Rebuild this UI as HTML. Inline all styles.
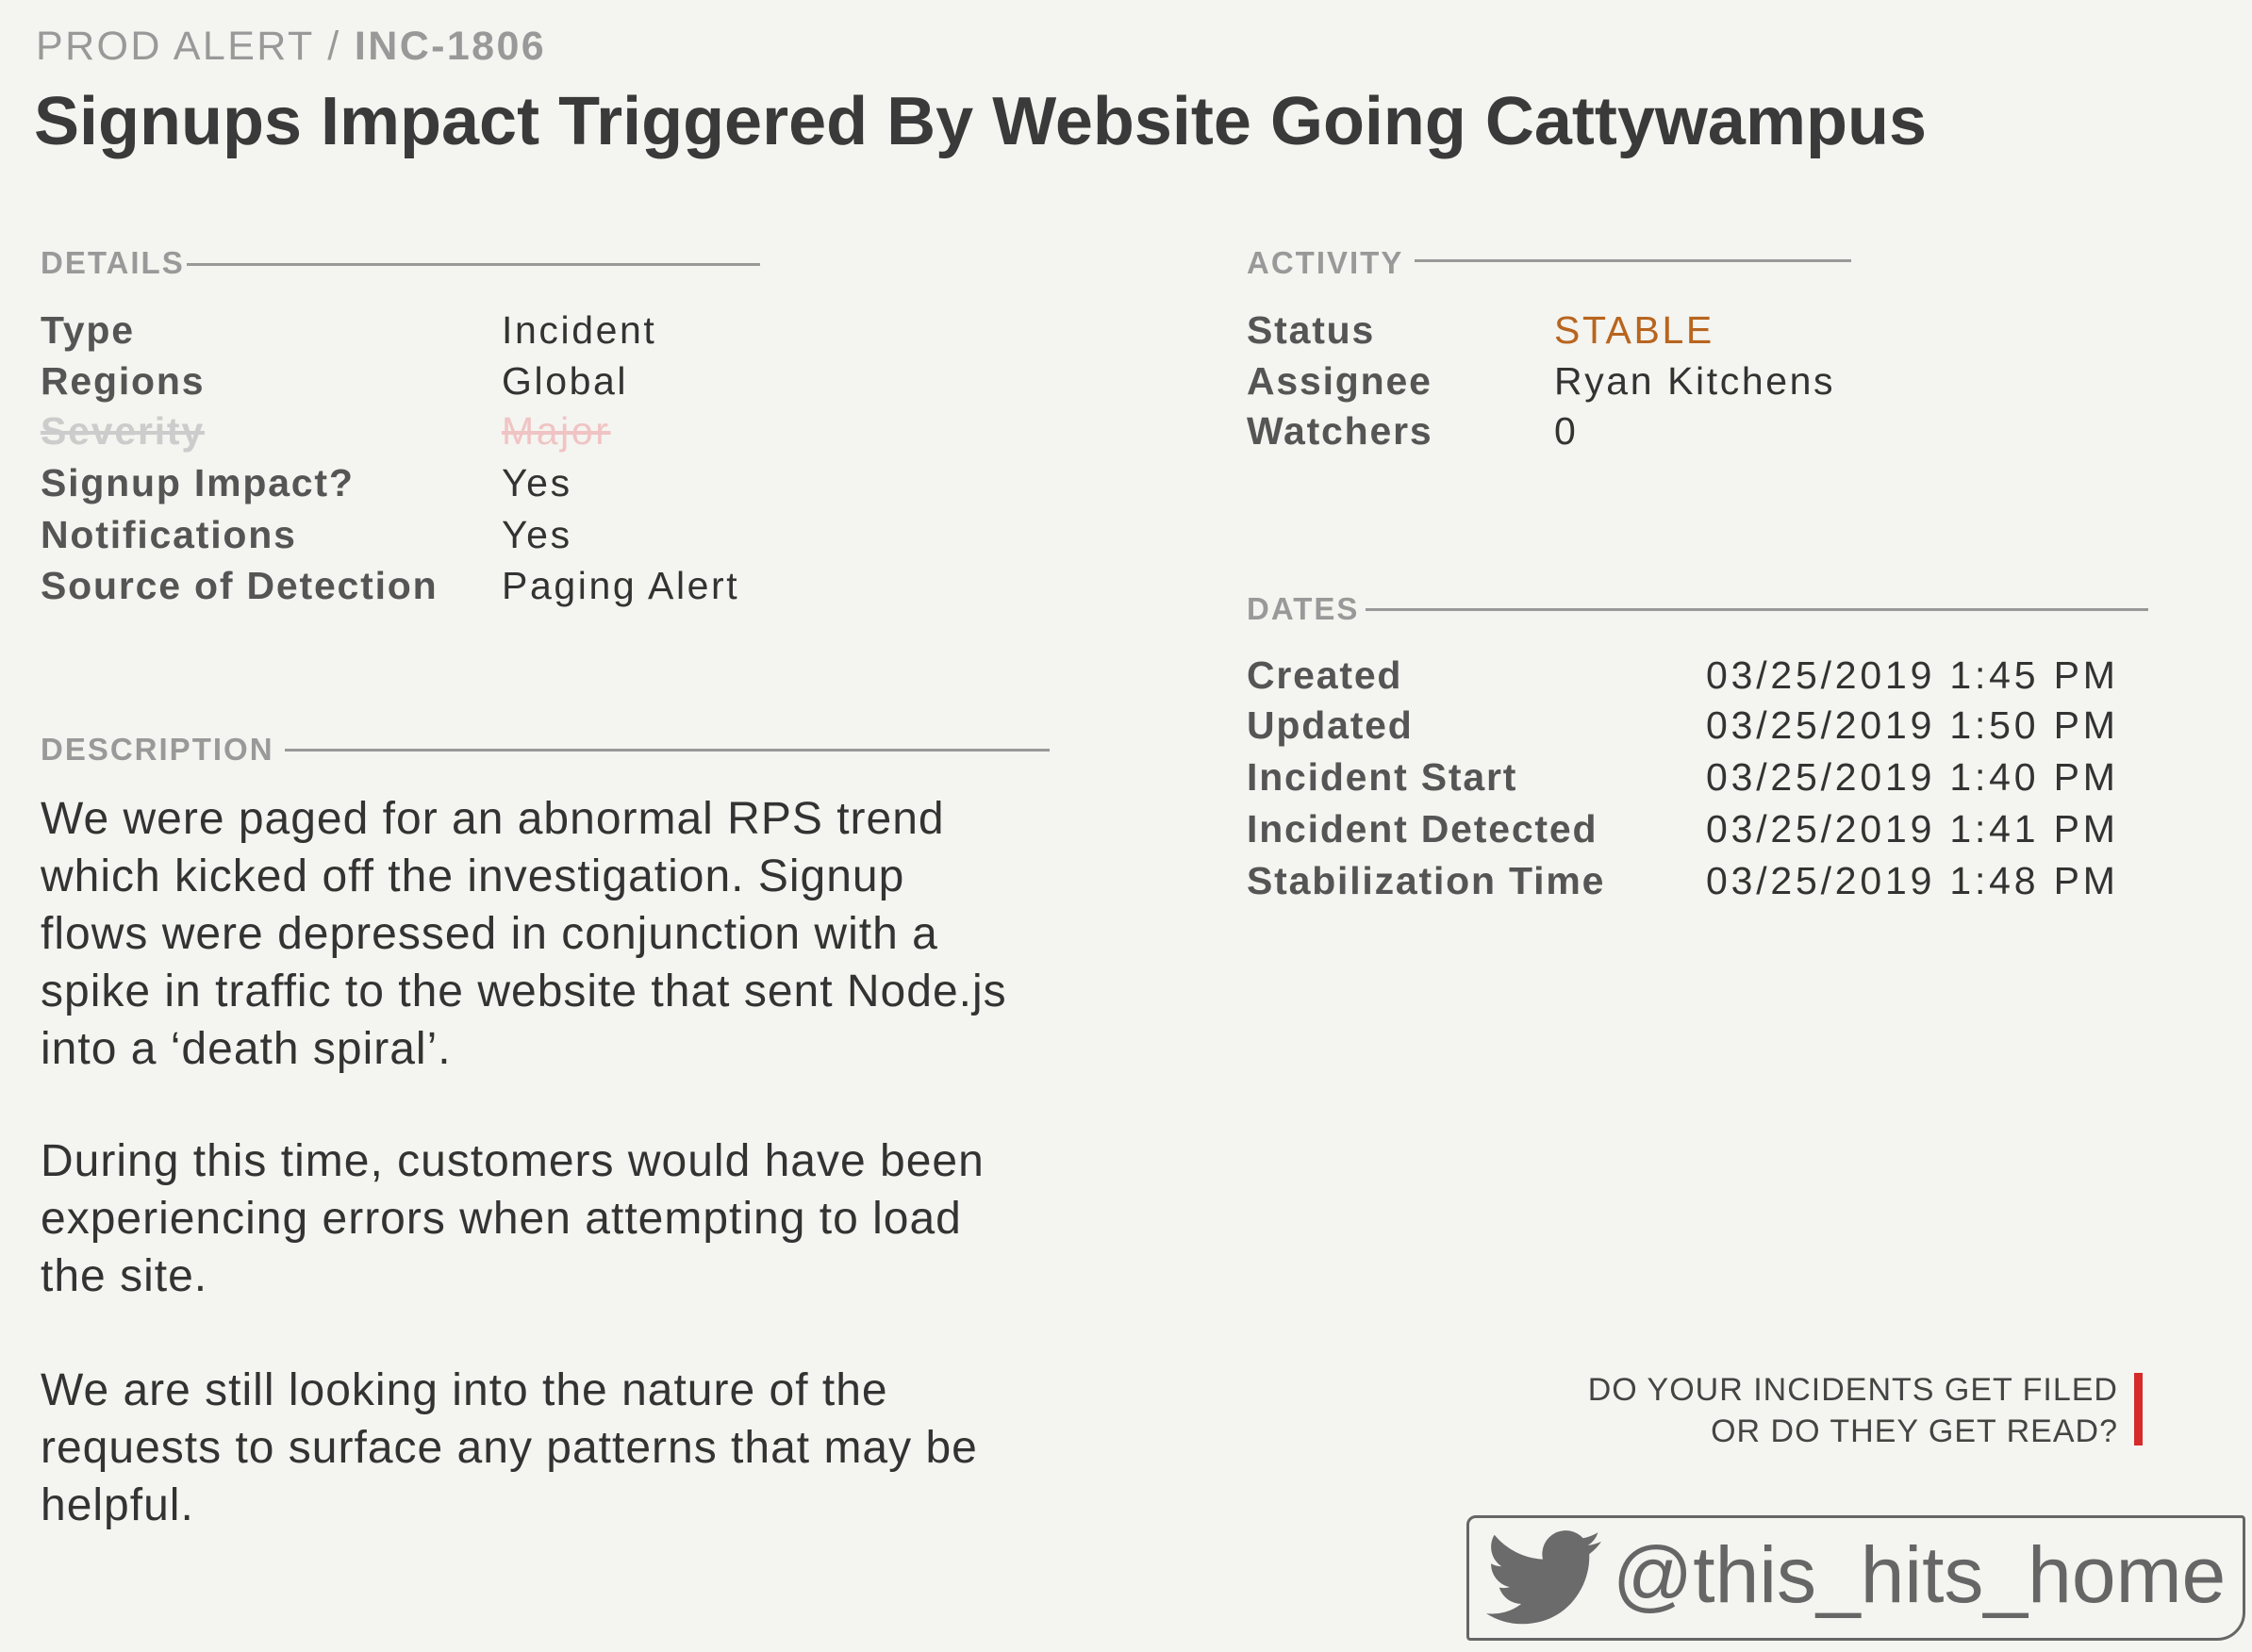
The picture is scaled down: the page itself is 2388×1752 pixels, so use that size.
<!DOCTYPE html>
<html><head><meta charset="utf-8"><style>
html,body{margin:0;padding:0}
body{width:2388px;height:1752px;background:#f4f4f0;position:relative;overflow:hidden;font-family:"Liberation Sans",sans-serif}
.t{position:absolute;white-space:nowrap}
.h{position:absolute;font-weight:bold;color:#999;font-size:33px;line-height:40px;letter-spacing:2px}
.ln{position:absolute;height:3px;background:#999}
.l{position:absolute;font-weight:bold;color:#555;font-size:41px;line-height:54px;white-space:nowrap;letter-spacing:1.8px}
.v{position:absolute;color:#333;font-size:41px;line-height:54px;white-space:nowrap;letter-spacing:2.6px}
.d{letter-spacing:3.8px}
.p{position:absolute;left:43px;color:#333;font-size:48px;line-height:61px;white-space:nowrap;letter-spacing:1px}
</style></head><body>
<div class="t" style="left:38px;top:25px;font-size:43px;line-height:48px;color:#999;letter-spacing:2.4px">PROD ALERT / <b>INC-1806</b></div>
<div class="t" style="left:36px;top:86px;font-size:72px;line-height:86px;font-weight:bold;color:#3a3a3a;letter-spacing:0px">Signups Impact Triggered By Website Going Cattywampus</div>

<div class="h" style="left:43px;top:259px">DETAILS</div><div class="ln" style="left:198px;width:608px;top:279px"></div>
<div class="l" style="left:43px;top:323px">Type</div><div class="v" style="left:532px;top:323px">Incident</div>
<div class="l" style="left:43px;top:377px">Regions</div><div class="v" style="left:532px;top:377px">Global</div>
<div class="l" style="left:43px;top:430px;color:#ccc;text-decoration:line-through">Severity</div><div class="v" style="left:532px;top:430px;color:#f0c4c4;text-decoration:line-through">Major</div>
<div class="l" style="left:43px;top:485px">Signup Impact?</div><div class="v" style="left:532px;top:485px">Yes</div>
<div class="l" style="left:43px;top:540px">Notifications</div><div class="v" style="left:532px;top:540px">Yes</div>
<div class="l" style="left:43px;top:594px">Source of Detection</div><div class="v" style="left:532px;top:594px">Paging Alert</div>

<div class="h" style="left:1322px;top:259px">ACTIVITY</div><div class="ln" style="left:1500px;width:463px;top:275px"></div>
<div class="l" style="left:1322px;top:323px">Status</div><div class="v" style="left:1648px;top:323px;color:#b8651f">STABLE</div>
<div class="l" style="left:1322px;top:377px">Assignee</div><div class="v" style="left:1648px;top:377px">Ryan Kitchens</div>
<div class="l" style="left:1322px;top:430px">Watchers</div><div class="v" style="left:1648px;top:430px">0</div>

<div class="h" style="left:1322px;top:626px">DATES</div><div class="ln" style="left:1448px;width:830px;top:645px"></div>
<div class="l" style="left:1322px;top:689px">Created</div><div class="v d" style="left:1809px;top:689px">03/25/2019 1:45 PM</div>
<div class="l" style="left:1322px;top:742px">Updated</div><div class="v d" style="left:1809px;top:742px">03/25/2019 1:50 PM</div>
<div class="l" style="left:1322px;top:797px">Incident Start</div><div class="v d" style="left:1809px;top:797px">03/25/2019 1:40 PM</div>
<div class="l" style="left:1322px;top:852px">Incident Detected</div><div class="v d" style="left:1809px;top:852px">03/25/2019 1:41 PM</div>
<div class="l" style="left:1322px;top:907px">Stabilization Time</div><div class="v d" style="left:1809px;top:907px">03/25/2019 1:48 PM</div>

<div class="h" style="left:43px;top:775px">DESCRIPTION</div><div class="ln" style="left:302px;width:811px;top:794px"></div>
<div class="p" style="top:838px">We were paged for an abnormal RPS trend<br>which kicked off the investigation. Signup<br>flows were depressed in conjunction with a<br>spike in traffic to the website that sent Node.js<br>into a ‘death spiral’.</div>
<div class="p" style="top:1201px">During this time, customers would have been<br>experiencing errors when attempting to load<br>the site.</div>
<div class="p" style="top:1444px">We are still looking into the nature of the<br>requests to surface any patterns that may be<br>helpful.</div>

<div class="t" style="right:142px;top:1452px;font-size:34px;line-height:44px;color:#444;text-align:right;letter-spacing:1px">DO YOUR INCIDENTS GET FILED<br>OR DO THEY GET READ?</div>
<div style="position:absolute;left:2263px;top:1456px;width:9px;height:77px;background:#d52b2b"></div>

<div style="position:absolute;left:1555px;top:1607px;width:820px;height:127px;border:3px solid #666;border-radius:10px 4px 30px 4px"></div>
<svg style="position:absolute;left:1576px;top:1622px" width="122" height="104" viewBox="0 0 24 20"><path fill="#6b6b6b" d="M24 2.3a9.8 9.8 0 0 1-2.8.8A4.9 4.9 0 0 0 23.3.4a9.9 9.9 0 0 1-3.1 1.2A4.9 4.9 0 0 0 11.8 6 14 14 0 0 1 1.7.9a4.9 4.9 0 0 0 1.5 6.6A4.9 4.9 0 0 1 1 6.9 4.9 4.9 0 0 0 4.9 11.8a4.9 4.9 0 0 1-2.2.1 4.9 4.9 0 0 0 4.6 3.4A9.9 9.9 0 0 1 0 17.3 14 14 0 0 0 7.5 19.5c9.1 0 14-7.5 14-14v-.6A10 10 0 0 0 24 2.3z"/></svg>
<div class="t" style="left:1710px;top:1620px;font-size:84px;line-height:100px;color:#666;letter-spacing:0px">@this_hits_home</div>
</body></html>
